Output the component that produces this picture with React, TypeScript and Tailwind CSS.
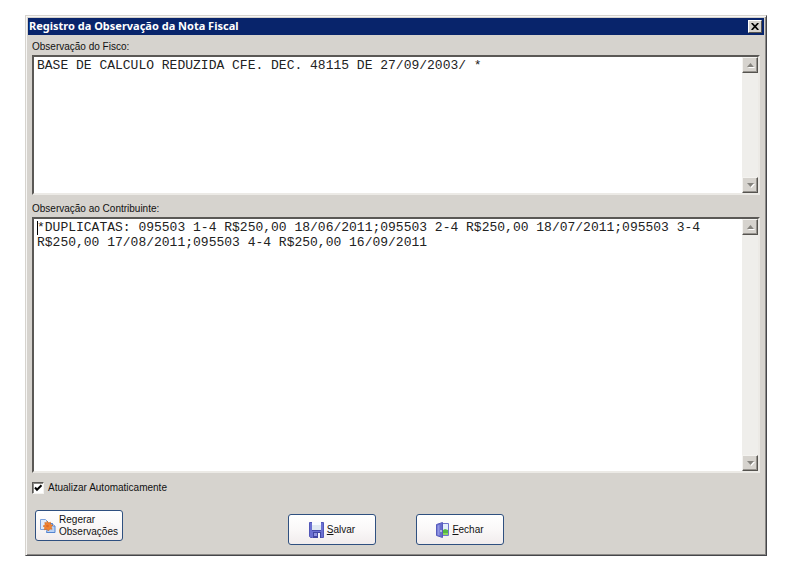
import { useId, type ReactNode } from "react";

function Arrow({ up }: { up?: boolean }) {
  return (
    <svg width="7" height="4" viewBox="0 0 7 4" className="drop-shadow-[1px_1px_0_#ffffff]" aria-hidden="true">
      <path d={up ? "M0 4h7L3.500 0z" : "M0 0h7L3.500 4z"} fill="#85837e" />
    </svg>
  );
}

function ScrollButton({ up }: { up?: boolean }) {
  return (
    <button
      type="button"
      aria-label={up ? "Rolar para cima" : "Rolar para baixo"}
      className="flex h-4 w-4 items-center justify-center border border-t-[#f4f3f0] border-l-[#f4f3f0] border-r-[#55534f] border-b-[#55534f] bg-[#d6d3ce] shadow-[inset_-1px_-1px_0_#96938e]"
    >
      <Arrow up={up} />
    </button>
  );
}

interface MemoProps {
  label: string;
  text: string;
  size: string;
  caret?: boolean;
}

function Memo({ label, text, size, caret }: MemoProps) {
  const id = useId();
  return (
    <div className="flex flex-col">
      <label htmlFor={id} className="flex h-5 items-center pt-0.5">
        {label}
      </label>
      <div
        className={`relative flex border-2 border-t-[#5a5855] border-l-[#5a5855] border-r-[#eceae6] border-b-[#eceae6] bg-white ${size}`}
      >
        <textarea
          id={id}
          defaultValue={text}
          spellCheck={false}
          className="min-w-0 flex-1 resize-none overflow-hidden bg-white px-[3px] pt-px font-['Liberation_Mono',monospace] text-[13px] leading-[15px] text-[#222222] outline-none"
        />
        {caret && <span className="absolute top-0.5 left-[3px] h-[14px] w-px bg-black" />}
        <div className="flex w-4 flex-col justify-between bg-[#efeeeb]">
          <ScrollButton up />
          <ScrollButton />
        </div>
      </div>
    </div>
  );
}

function ActionButton({ icon, children }: { icon: ReactNode; children: ReactNode }) {
  return (
    <button
      type="button"
      className="flex h-[31px] w-[88px] items-center justify-center gap-[3px] rounded-[3px] border border-[#2f5080] bg-linear-to-b from-white via-[#faf8f8] to-[#f1eced] text-left leading-3"
    >
      {icon}
      <span>{children}</span>
    </button>
  );
}

function RegenerateIcon() {
  return (
    <svg width="16" height="16" viewBox="0 0 16 16" className="shrink-0" aria-hidden="true">
      <path d="M.5 1.500h5l3 3v7h-8z" fill="#dfeafb" stroke="#7ba1dd" />
      <path d="M8.500 5.500h4l2.500 2.500v6.500H6.500z" fill="#b9d2f6" stroke="#5585d0" />
      <path d="M12.500 5.500V8H15" fill="#fff" stroke="#5585d0" />
      <path
        d="M7 3l1.300 2 2.200-.8v2.300l2.300.8-1.700 1.700 1 2.200-2.400-.2-1.200 2-1.700-1.800-2.500.5.600-2.300L3 8l2.200-1L4.800 4.500l2 .4z"
        fill="#f08434"
        stroke="#d2691f"
        strokeWidth=".6"
      />
      <circle cx="7.500" cy="8" r="1.300" fill="#dd6a2a" />
    </svg>
  );
}

function SaveIcon() {
  return (
    <svg width="15" height="16" viewBox="0 0 15 16" className="shrink-0" aria-hidden="true">
      <path d="M.5.500h14v15h-4l-1-1h-5l-1 1h-2l-1-1z" fill="#6a70d2" stroke="#5257b8" />
      <path d="M3 0h9v8H3z" fill="#dfe8f2" />
      <path d="M3 0h9v3H3z" fill="#f7faff" />
      <path d="M3 8.500h9" stroke="#484dab" />
      <path d="M4 10h8v6H4z" fill="#4146a2" />
      <path d="M5 11h3v3H5z" fill="#8d92e0" />
      <path d="M9 11h2v5H9z" fill="#f3f4fd" />
    </svg>
  );
}

function DoorIcon() {
  return (
    <svg width="13" height="16" viewBox="0 0 13 16" className="shrink-0" aria-hidden="true">
      <path d="M5.500 1.500h7v12h-7z" fill="#e4effb" stroke="#7075cc" />
      <path d="M7 8l2-1 3 1v5H7z" fill="#55b944" />
      <path d="M7 11h5v2H7z" fill="#8ad85c" />
      <path d="M.5 2.500l6-2v15l-6-2z" fill="#686dcd" stroke="#575cbc" />
      <path d="M1.500 3.500l2-.7v10.700l-2-.6z" fill="#9297e4" />
      <path d="M5 8v2" stroke="#fff" />
    </svg>
  );
}

export default function App() {
  return (
    <div className="min-h-screen bg-white pt-[15px] pr-[29px] pb-5 pl-[25px] font-['Liberation_Sans',Arial,sans-serif] text-[10px] text-[#111111]">
      <main className="border border-t-[#d6d3ce] border-l-[#d6d3ce] border-r-[#45464a] border-b-[#45464a] bg-[#d6d3ce] shadow-[inset_1px_1px_0_#f7f6f4,inset_-1px_-1px_0_#8b8986]">
        <div className="p-0.5">
          <header className="flex h-[17px] items-center justify-between bg-[#08246b] pr-0.5 pl-px text-white">
            <h1 className="font-['Noto_Sans','DejaVu_Sans',sans-serif] text-[11px] font-bold">
              Registro da Observação da Nota Fiscal
            </h1>
            <button
              type="button"
              aria-label="Fechar janela"
              className="flex h-[13px] w-[14px] items-center justify-center border border-t-white border-l-white border-r-[#55534f] border-b-[#55534f] bg-[#d6d3ce]"
            >
              <svg width="8" height="7" viewBox="0 0 8 7" aria-hidden="true">
                <path d="M.7 0l6.600 7M7.300 0L.7 7" stroke="#000" strokeWidth="1.700" />
              </svg>
            </button>
          </header>

          <div className="flex flex-col px-1 pb-2">
            <Memo
              label="Observação do Fisco:"
              text="BASE DE CALCULO REDUZIDA CFE. DEC. 48115 DE 27/09/2003/ *"
              size="h-[140px]"
            />
            <div className="pt-0.5">
              <Memo
                label="Observação ao Contribuinte:"
                text="*DUPLICATAS: 095503 1-4 R$250,00 18/06/2011;095503 2-4 R$250,00 18/07/2011;095503 3-4 R$250,00 17/08/2011;095503 4-4 R$250,00 16/09/2011"
                size="h-[256px]"
                caret
              />
            </div>

            <label className="mt-[7px] flex items-center gap-1 self-start leading-4">
              <span className="relative flex h-3 w-3">
                <input
                  type="checkbox"
                  defaultChecked
                  className="peer h-3 w-3 appearance-none border border-t-[#5a5855] border-l-[#5a5855] border-r-[#f4f3f0] border-b-[#f4f3f0] bg-white shadow-[inset_1px_1px_0_#8b8986]"
                />
                <svg
                  viewBox="0 0 12 12"
                  className="pointer-events-none absolute inset-0 hidden peer-checked:block"
                  aria-hidden="true"
                >
                  <path d="M3 5.500l2 2.200L9.500 3.300" fill="none" stroke="#000" strokeWidth="2" />
                </svg>
              </span>
              Atualizar Automaticamente
            </label>

            <footer className="mt-[14px] grid grid-cols-[1fr_auto_1fr] items-start">
              <div className="pl-[3px]">
                <ActionButton icon={<RegenerateIcon />}>
                  Regerar
                  <br />
                  Observações
                </ActionButton>
              </div>
              <div className="flex gap-10 pt-1">
                <ActionButton icon={<SaveIcon />}>
                  <u>S</u>alvar
                </ActionButton>
                <ActionButton icon={<DoorIcon />}>
                  <u>F</u>echar
                </ActionButton>
              </div>
            </footer>
          </div>
        </div>
      </main>
    </div>
  );
}
